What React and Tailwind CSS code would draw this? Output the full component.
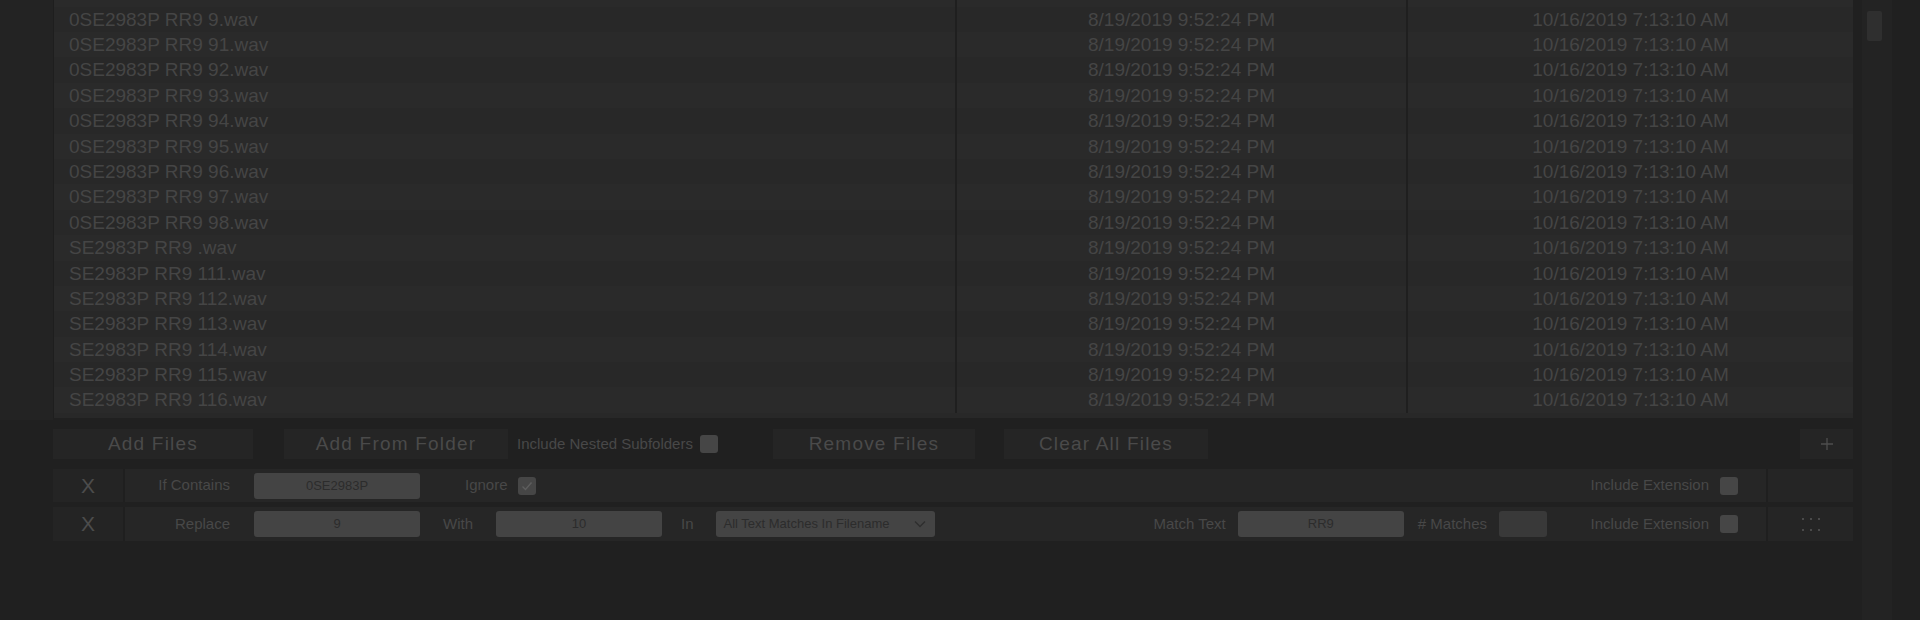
import React from 'react'

// File list rows (list is scrolled, the first row only shows a sliver)
const files = [
  '',
  '0SE2983P RR9 9.wav',
  '0SE2983P RR9 91.wav',
  '0SE2983P RR9 92.wav',
  '0SE2983P RR9 93.wav',
  '0SE2983P RR9 94.wav',
  '0SE2983P RR9 95.wav',
  '0SE2983P RR9 96.wav',
  '0SE2983P RR9 97.wav',
  '0SE2983P RR9 98.wav',
  'SE2983P RR9 .wav',
  'SE2983P RR9 111.wav',
  'SE2983P RR9 112.wav',
  'SE2983P RR9 113.wav',
  'SE2983P RR9 114.wav',
  'SE2983P RR9 115.wav',
  'SE2983P RR9 116.wav',
]

function Checkbox({ checked }) {
  return (
    <div className="w-[18px] h-[18px] rounded-[3px] bg-[#464646] flex items-center justify-center shrink-0">
      {checked && (
        <svg width="14" height="14" viewBox="0 0 14 14" fill="none">
          <polyline points="2.5,7.5 5.5,10.5 11.5,3.5" stroke="#5e5e5e" strokeWidth="1.4" />
        </svg>
      )}
    </div>
  )
}

function Field({ value, className = 'w-[166px]' }) {
  return (
    <div className={`${className} h-[26px] rounded-[3px] bg-[#444444] flex items-center justify-center text-[13px] text-[#2c2c2c] shrink-0`}>
      {value}
    </div>
  )
}

function Button({ label, className }) {
  return (
    <div className={`${className} h-[30px] bg-[#252525] flex items-center justify-center text-[19px] tracking-[1.2px] text-[#4a4a4a] shrink-0`}>
      {label}
    </div>
  )
}

function RuleRow({ children, handle, className }) {
  return (
    <div className={`${className} flex gap-[2px] bg-[#1f1f1f]`}>
      <div className="w-[70px] bg-[#242424] flex items-center justify-center text-[21px] text-[#4c4c4c]">X</div>
      <div className="flex-1 bg-[#262626] flex items-center text-[15px] text-[#484848] pr-[28px]">
        {children}
      </div>
      <div className="w-[85px] bg-[#252525] flex items-center justify-center">
        {handle && (
          <div className="grid grid-cols-3 gap-x-[6px] gap-y-[9px]">
            {[0, 1, 2, 3, 4, 5].map((i) => (
              <div key={i} className="w-[2px] h-[2px] bg-[#4a4a4a]" />
            ))}
          </div>
        )}
      </div>
    </div>
  )
}

export default function App() {
  return (
    <div className="w-[1920px] h-[620px] bg-[#202020] flex overflow-hidden font-['Liberation_Sans',Arial,sans-serif]">
      {/* left margin */}
      <div className="w-[53px] shrink-0">
        <div className="h-[420px] bg-[#232323]" />
      </div>

      {/* main column */}
      <div className="w-[1800px] shrink-0 flex flex-col">
        {/* file table */}
        <div className="h-[418px] bg-[#282828] border-l border-[#1e1e1e] overflow-hidden pb-[5px]">
          <div className="h-full overflow-hidden">
            <div className="-mt-[18.8px]">
              {files.map((name, i) => (
                <div
                  key={i}
                  className={`h-[25.4px] grid grid-cols-[901px_451px_447px] text-[19px] leading-[25.4px] text-[#454545] ${
                    i % 2 === 0 ? 'bg-[#2a2a2a]' : 'bg-[#282828]'
                  }`}
                >
                  <div className="pl-[15px] whitespace-nowrap">{name}</div>
                  <div className="border-l-2 border-[#1f1f1f] text-center whitespace-nowrap">{name && '8/19/2019 9:52:24 PM'}</div>
                  <div className="border-l-2 border-[#1f1f1f] text-center whitespace-nowrap">{name && '10/16/2019 7:13:10 AM'}</div>
                </div>
              ))}
            </div>
          </div>
        </div>

        {/* buttons */}
        <div className="mt-[11px] h-[30px] flex items-center">
          <Button label="Add Files" className="w-[200px]" />
          <Button label="Add From Folder" className="w-[224px] ml-[31px]" />
          <span className="ml-[9px] text-[15px] text-[#484848] whitespace-nowrap">Include Nested Subfolders</span>
          <div className="ml-[7px]">
            <Checkbox />
          </div>
          <Button label="Remove Files" className="w-[202px] ml-[55px]" />
          <Button label="Clear All Files" className="w-[204px] ml-[29px]" />
          <div className="ml-auto w-[53px] h-[30px] bg-[#252525] flex items-center justify-center">
            <svg width="14" height="14" viewBox="0 0 14 14">
              <path d="M7 1v12M1 7h12" stroke="#4e4e4e" strokeWidth="1.3" />
            </svg>
          </div>
        </div>

        {/* rule: if contains */}
        <RuleRow className="mt-[10px] h-[33px]">
          <div className="w-[105px] text-right">If Contains</div>
          <div className="ml-[24px]">
            <Field value="0SE2983P" />
          </div>
          <span className="ml-[45px]">Ignore</span>
          <div className="ml-[10px]">
            <Checkbox checked />
          </div>
          <span className="ml-auto">Include Extension</span>
          <div className="ml-[11px]">
            <Checkbox />
          </div>
        </RuleRow>

        {/* rule: replace */}
        <RuleRow className="mt-[5px] h-[34px]" handle>
          <div className="w-[105px] text-right">Replace</div>
          <div className="ml-[24px]">
            <Field value="9" />
          </div>
          <span className="ml-[23px]">With</span>
          <div className="ml-[23px]">
            <Field value="10" />
          </div>
          <span className="ml-[19px]">In</span>
          <div className="ml-[22px] w-[219px] h-[26px] rounded-[3px] bg-[#444444] flex items-center justify-between pl-[8px] pr-[9px] text-[13px] text-[#2c2c2c]">
            <span className="whitespace-nowrap">All Text Matches In Filename</span>
            <svg width="12" height="8" viewBox="0 0 12 8" fill="none">
              <polyline points="1,1.5 6,6.5 11,1.5" stroke="#2e2e2e" strokeWidth="1.3" />
            </svg>
          </div>
          <span className="ml-[219px] whitespace-nowrap">Match Text</span>
          <div className="ml-[12px]">
            <Field value="RR9" />
          </div>
          <span className="ml-[14px] whitespace-nowrap"># Matches</span>
          <div className="ml-[12px] w-[48px] h-[26px] rounded-[3px] bg-[#393939]" />
          <span className="ml-auto">Include Extension</span>
          <div className="ml-[11px]">
            <Checkbox />
          </div>
        </RuleRow>
      </div>

      {/* scrollbar strip */}
      <div className="w-[67px] shrink-0 flex">
        <div className="ml-[9px] w-[30px] h-full bg-[#232323] pt-[11px] pl-[5px]">
          <div className="w-[15px] h-[30px] rounded-[2px] bg-[#2f2f2f]" />
        </div>
      </div>
    </div>
  )
}
